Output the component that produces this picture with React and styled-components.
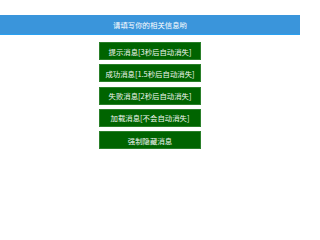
import React from "react";
import styled, { createGlobalStyle } from "styled-components";

const GlobalStyle = createGlobalStyle`
  html, body {
    margin: 0;
    padding: 0;
    background: #ffffff;
    font-family: "Noto Sans CJK SC", "Liberation Sans", sans-serif;
  }
`;

const Page = styled.div`
  width: 300px;
  height: 200px;
  padding-top: 15px;
  box-sizing: border-box;
`;

const Header = styled.div`
  height: 19px;
  background: #3a95db;
  border-bottom: 1px solid #2aa0f0;
  color: #ffffff;
  font-size: 7.4px;
  display: flex;
  align-items: center;
  justify-content: center;
  letter-spacing: 0;
`;

const ButtonList = styled.div`
  display: flex;
  flex-direction: column;
  align-items: center;
  gap: 4.3px;
  margin-top: 7px;
`;

const Button = styled.button`
  width: 102px;
  height: 18px;
  padding: 0;
  background: #006400;
  border: 1px solid #2a7f2a;
  color: #f2f7f2;
  font-family: inherit;
  font-size: 7.4px;
  display: flex;
  align-items: center;
  justify-content: center;
  cursor: pointer;
`;

const messages = [
  "提示消息[3秒后自动消失]",
  "成功消息[1.5秒后自动消失]",
  "失败消息[2秒后自动消失]",
  "加载消息[不会自动消失]",
  "强制隐藏消息",
];

export default function App() {
  return (
    <Page>
      <GlobalStyle />
      <Header>请填写你的相关信息哟</Header>
      <ButtonList>
        {messages.map((text) => (
          <Button key={text}>{text}</Button>
        ))}
      </ButtonList>
    </Page>
  );
}
